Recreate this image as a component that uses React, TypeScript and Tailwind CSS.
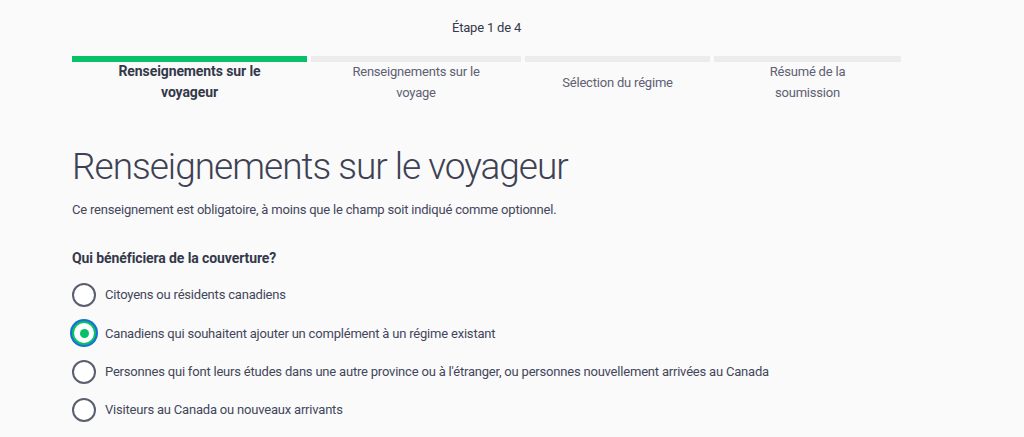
const steps = [
  { label: "Renseignements sur le voyageur", width: "w-[235px]", text: "max-w-[165px]", active: true },
  { label: "Renseignements sur le voyage", width: "w-[210px]", text: "max-w-[140px]", active: false },
  { label: "Sélection du régime", width: "w-[185px]", text: "max-w-[170px]", active: false },
  { label: "Résumé de la soumission", width: "w-[187px]", text: "max-w-[110px]", active: false },
];

const options = [
  "Citoyens ou résidents canadiens",
  "Canadiens qui souhaitent ajouter un complément à un régime existant",
  "Personnes qui font leurs études dans une autre province ou à l'étranger, ou personnes nouvellement arrivées au Canada",
  "Visiteurs au Canada ou nouveaux arrivants",
];

function Radio({ checked }: { checked: boolean }) {
  if (checked) {
    return (
      <span className="flex h-[24px] w-[24px] shrink-0 items-center justify-center rounded-full border-2 border-[#06c167] bg-white shadow-[0_0_0_2px_#1a6fd6]">
        <span className="h-[9px] w-[9px] rounded-full bg-[#06c167]" />
      </span>
    );
  }
  return (
    <span className="h-[24px] w-[24px] shrink-0 rounded-full border-2 border-[#5b5e6e] bg-white" />
  );
}

export default function App() {
  const selected = 1;

  return (
    <div
      className="min-h-[437px] w-full bg-[#fafafa] text-[13px] tracking-[-0.2px] text-[#43465a]"
      style={{ fontFamily: 'Roboto, "Liberation Sans", sans-serif' }}
    >
      <div className="ml-[72px] flex w-[829px] flex-col pt-[18px]">
        {/* step indicator */}
        <div className="text-center leading-[20px] text-[#34384b]">Étape 1 de 4</div>
        <div className="mt-[18px] flex gap-[4px]">
          {steps.map((s) => (
            <div key={s.label} className={`flex flex-col ${s.width}`}>
              <div className={`h-[6px] ${s.active ? "bg-[#06c167]" : "bg-[#ececec]"}`} />
              <div className="-mt-[1px] flex h-[42px] items-center justify-center">
                <span
                  className={`text-center leading-[21px] ${s.text} ${
                    s.active
                      ? "text-[14px] font-bold tracking-[-0.1px] text-[#34384b]"
                      : "text-[#5e6073]"
                  }`}
                >
                  {s.label}
                </span>
              </div>
            </div>
          ))}
        </div>

        {/* form header */}
        <h1 className="mt-[40px] text-[37px] leading-[48px] font-light tracking-[-1px] text-[#3d4153]">
          Renseignements sur le voyageur
        </h1>
        <p className="mt-[9px] leading-[20px]">
          Ce renseignement est obligatoire, à moins que le champ soit indiqué comme optionnel.
        </p>

        <div className="mt-[28px] text-[14px] leading-[20px] font-bold tracking-[-0.1px] text-[#34384b]">
          Qui bénéficiera de la couverture?
        </div>
        <div className="mt-[8px] flex flex-col">
          {options.map((o, i) => (
            <label key={o} className="flex h-[38.3px] cursor-pointer items-center gap-[9px]">
              <Radio checked={i === selected} />
              <span>{o}</span>
            </label>
          ))}
        </div>
      </div>
    </div>
  );
}
